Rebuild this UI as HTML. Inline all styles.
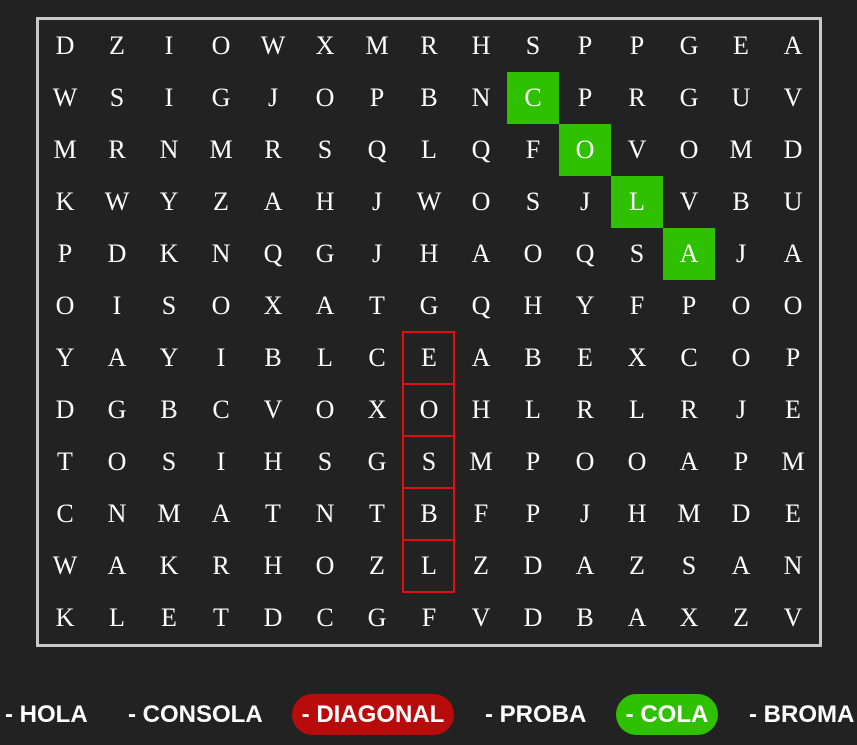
<!DOCTYPE html>
<html><head><meta charset="utf-8"><style>
html,body{margin:0;padding:0;background:#222;width:857px;height:745px;overflow:hidden;position:relative}
#g{position:absolute;left:36px;top:17px;width:780px;height:624px;border:3px solid #c8c8c8;}
.c{position:absolute;width:52px;height:52px;text-align:center;color:#fff;font:26px "Liberation Serif",serif;line-height:52px;}
.gr{background:#2fc000;}
.rd{position:absolute;width:53px;height:54px;box-sizing:border-box;border:2px solid #e01010;}
.l{position:absolute;top:694px;height:41px;color:#fff;font:bold 24px "Liberation Sans",sans-serif;line-height:42px;white-space:nowrap}
.p{border-radius:21px;text-align:center}
</style></head><body>
<div id="g"></div>
<div class="l" style="left:5px">- HOLA</div>
<div class="l" style="left:128px">- CONSOLA</div>
<div class="l p" style="left:292px;width:162px;background:#b80b0b">- DIAGONAL</div>
<div class="l" style="left:485px">- PROBA</div>
<div class="l p" style="left:616px;width:102px;background:#2fc000">- COLA</div>
<div class="l" style="left:749px">- BROMA</div>
<script>
var rows=["DZIOWXMRHSPPGEA","WSIGJOPBNCPRGUV","MRNMRSQLQFOVOMD","KWYZAHJWOSJLVBU","PDKNQGJHAOQSAJA","OISOXATGQHYFPOO","YAYIBLCEABEXCOP","DGBCVOXOHLRLRJE","TOSIHSGSMPOOAPM","CNMATNTBFPJHMDE","WAKRHOZLZDAZSAN","KLETDCGFVDBAXZV"];
var green={"1,9":1,"2,10":1,"3,11":1,"4,12":1};
var h="";
for(var r=0;r<12;r++)for(var c=0;c<15;c++){
h+='<div class="c'+(green[r+","+c]?' gr':'')+'" style="left:'+(52*c)+'px;top:'+(52*r)+'px">'+rows[r][c]+'</div>';}
document.getElementById("g").innerHTML=h;
var b="";
for(var k=0;k<5;k++)b+='<div class="rd" style="left:402px;top:'+(331+52*k)+'px"></div>';
document.body.insertAdjacentHTML("beforeend",b);
</script>
</body></html>
